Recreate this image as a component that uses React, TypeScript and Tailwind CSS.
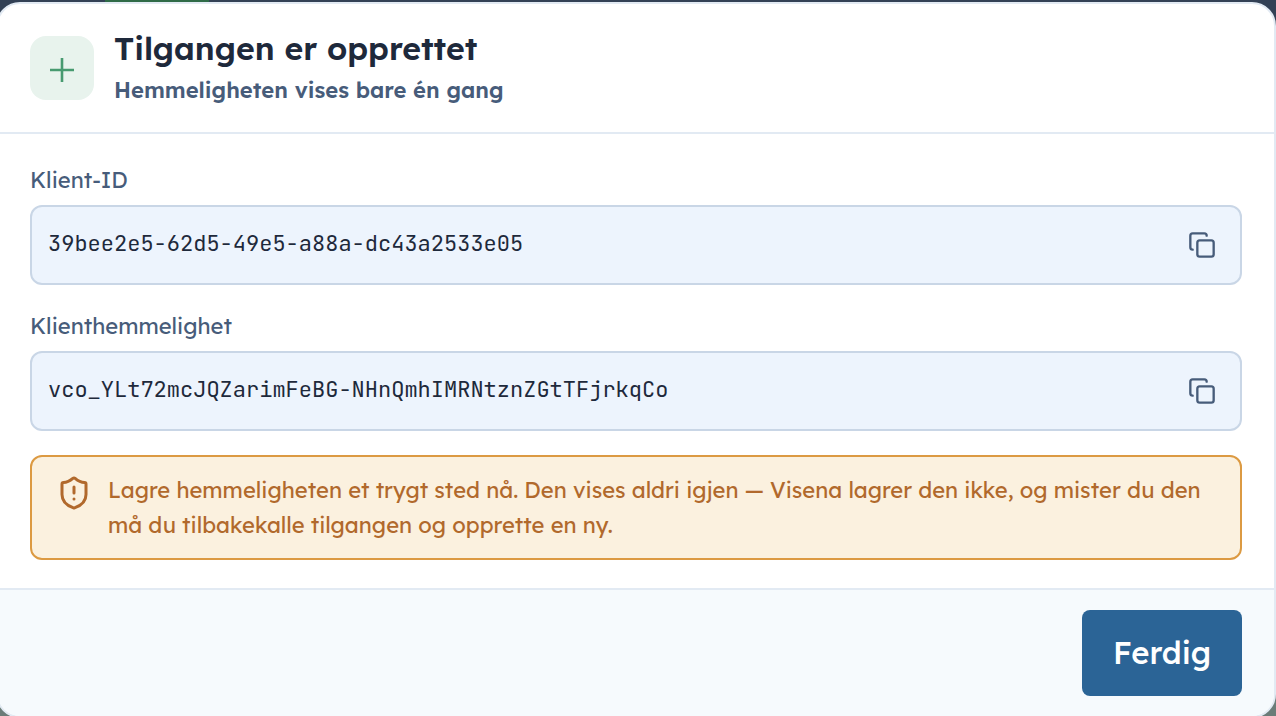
import { Copy, ShieldAlert } from 'lucide-react'

const fields = [
  { id: 'client-id', label: 'Klient-ID', value: '39bee2e5-62d5-49e5-a88a-dc43a2533e05' },
  { id: 'client-secret', label: 'Klienthemmelighet', value: 'vco_YLt72mcJQZarimFeBG-NHnQmhIMRNtznZGtTFjrkqCo' },
]

function CopyField({ id, label, value }: { id: string; label: string; value: string }) {
  return (
    <div>
      <label htmlFor={id} className="mb-2 block text-[22px] leading-[34px] text-[#475c7a]">
        {label}
      </label>
      <div className="flex h-20 items-center rounded-xl border-2 border-[#c9d6e6] bg-[#edf4fd] px-4">
        <input
          id={id}
          readOnly
          defaultValue={value}
          className="min-w-0 flex-1 bg-transparent pb-1 font-['JetBrains_Mono','DejaVu_Sans_Mono',monospace] text-[22px] text-[#1e293b] outline-none"
        />
        <button type="button" aria-label="Kopier" className="flex size-11 items-center justify-center text-[#475c7a]">
          <Copy size={28} strokeWidth={2} />
        </button>
      </div>
    </div>
  )
}

export default function App() {
  return (
    <main className="h-screen overflow-hidden bg-[#334155] bg-linear-to-b from-[#334155] from-50% to-[#6b7c78] to-50% font-[Lexend,Inter,sans-serif]">
      {/* Strip of the page behind the dialog */}
      <div className="flex h-0.5 pl-[105px]">
        <div className="w-[104px] bg-[#2f6b47]" />
      </div>

      <section
        role="dialog"
        aria-labelledby="dialog-title"
        className="-ml-1 overflow-hidden rounded-3xl border-2 border-[#e2eaf3] bg-white"
      >
        {/* Header */}
        <header className="flex items-center gap-5 border-b-2 border-[#e2eaf3] px-8 py-6">
          <div className="flex size-16 shrink-0 items-center justify-center rounded-2xl bg-[#e8f3ed] pt-1">
            <svg width="24" height="24" viewBox="0 0 24 24" fill="none" stroke="#479a70" strokeWidth="2.6">
              <path d="M0 12h24M12 0v24" />
            </svg>
          </div>
          <div>
            <h1 id="dialog-title" className="text-[32px] leading-10 font-semibold text-[#1e293b]">
              Tilgangen er opprettet
            </h1>
            <p className="pt-1 text-[22px] leading-9 font-semibold text-[#475c7a]">Hemmeligheten vises bare én gang</p>
          </div>
        </header>

        {/* Body */}
        <div className="flex flex-col gap-6 px-8 pt-[29px] pb-7">
          {fields.map((field) => (
            <CopyField key={field.id} {...field} />
          ))}
          <div className="flex gap-4 rounded-xl border-2 border-[#dc9a42] bg-[#fbf1df] px-6 pt-4 pb-[15px] text-[#b1692c]">
            <ShieldAlert size={36} strokeWidth={2} className="mt-0.5 shrink-0" />
            <p className="text-[22px] leading-[35px]">
              Lagre hemmeligheten et trygt sted nå. Den vises aldri igjen — Visena lagrer den ikke, og mister du den
              må du tilbakekalle tilgangen og opprette en ny.
            </p>
          </div>
        </div>

        {/* Footer */}
        <footer className="flex justify-end border-t-2 border-[#e2eaf3] bg-[#f6fafd] px-8 py-5">
          <button
            type="button"
            className="min-w-40 rounded-lg bg-[#2b6496] px-7 py-5 text-[31px] leading-[46px] font-medium text-white"
          >
            Ferdig
          </button>
        </footer>
      </section>
    </main>
  )
}
